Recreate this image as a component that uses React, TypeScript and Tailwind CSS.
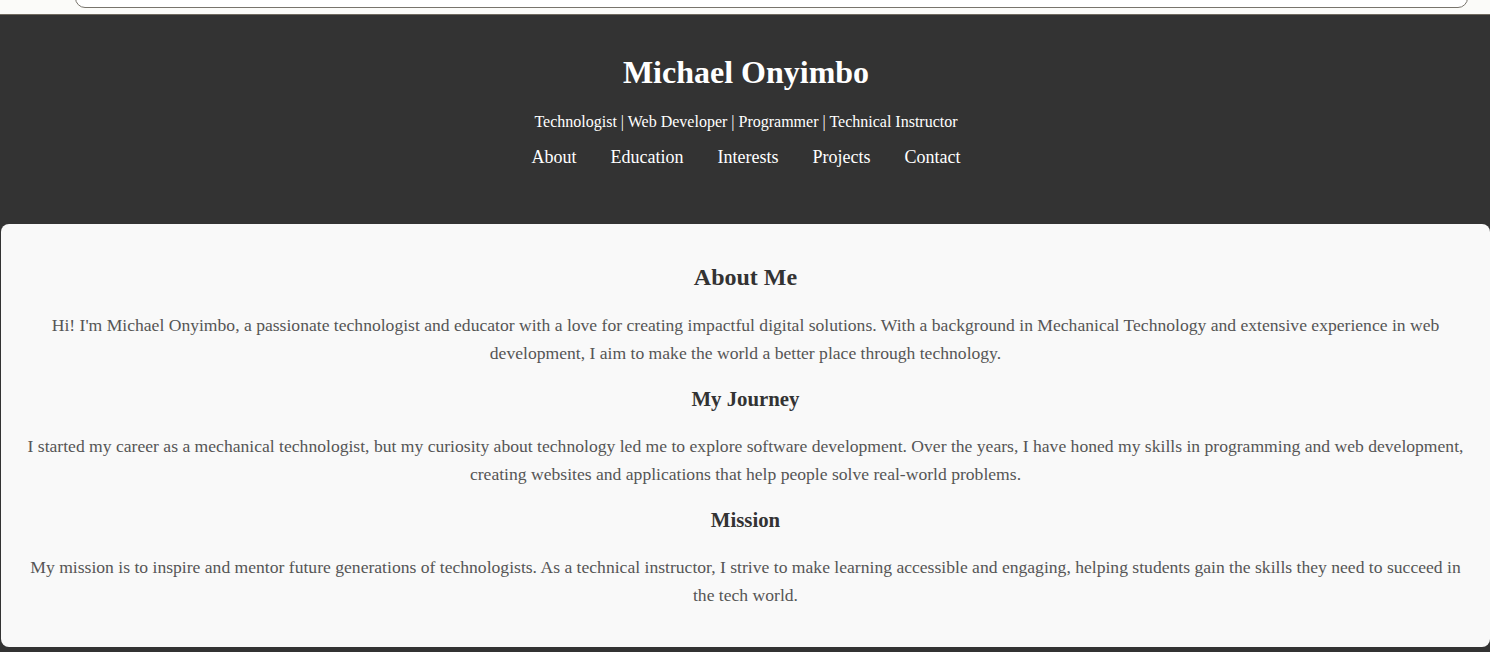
import React from 'react';

const navItems = ['About', 'Education', 'Interests', 'Projects', 'Contact'];

const sections = [
    {
        title: 'My Journey',
        text: 'I started my career as a mechanical technologist, but my curiosity about technology led me to explore software development. Over the years, I have honed my skills in programming and web development, creating websites and applications that help people solve real-world problems.',
    },
    {
        title: 'Mission',
        text: 'My mission is to inspire and mentor future generations of technologists. As a technical instructor, I strive to make learning accessible and engaging, helping students gain the skills they need to succeed in the tech world.',
    },
];

const App: React.FC = () => {
    return (
        <div className="min-h-[652px] bg-[#333333] font-['Liberation_Serif',serif] overflow-hidden">
            {/* leftover search bar strip */}
            <div className="h-[15px] bg-[#fbfbf9] border-b border-[#716b60] overflow-hidden">
                <div className="ml-[75px] mr-[22px] h-[20px] -mt-[12px] rounded-[12px] border border-[#78746c] bg-white" />
            </div>

            <header className="text-center text-white pl-[2px] pt-[39px] pb-[55px]">
                <h1 className="text-[32px] font-bold leading-[36px]">Michael Onyimbo</h1>
                <p className="mt-[22px] text-[16px] leading-[20px]">
                    Technologist | Web Developer | Programmer | Technical Instructor
                </p>
                <nav className="mt-[13px] flex justify-center gap-[34px] text-[18px] leading-[24px]">
                    {navItems.map(item => (
                        <a key={item} href={`#${item.toLowerCase()}`} className="text-white">
                            {item}
                        </a>
                    ))}
                </nav>
            </header>

            <main className="ml-[1px] mr-0 bg-[#f9f9f9] rounded-[8px] px-[20px] pt-[37px] pb-[38px] text-center">
                <h2 className="text-[24px] font-bold leading-[32px] text-[#333333]">About Me</h2>
                <p className="mt-[18px] text-[17.6px] leading-[28px] text-[#555555]">
                    Hi! I'm Michael Onyimbo, a passionate technologist and educator with a love for creating impactful digital solutions. With a background in Mechanical Technology and extensive experience in web development, I aim to make the world a better place through technology.
                </p>
                {sections.map(s => (
                    <div key={s.title}>
                        <h3 className="mt-[18px] text-[20.8px] font-bold leading-[28px] text-[#333333]">{s.title}</h3>
                        <p className="mt-[19px] text-[17.6px] leading-[28px] text-[#555555]">{s.text}</p>
                    </div>
                ))}
            </main>
        </div>
    );
};

export default App;
